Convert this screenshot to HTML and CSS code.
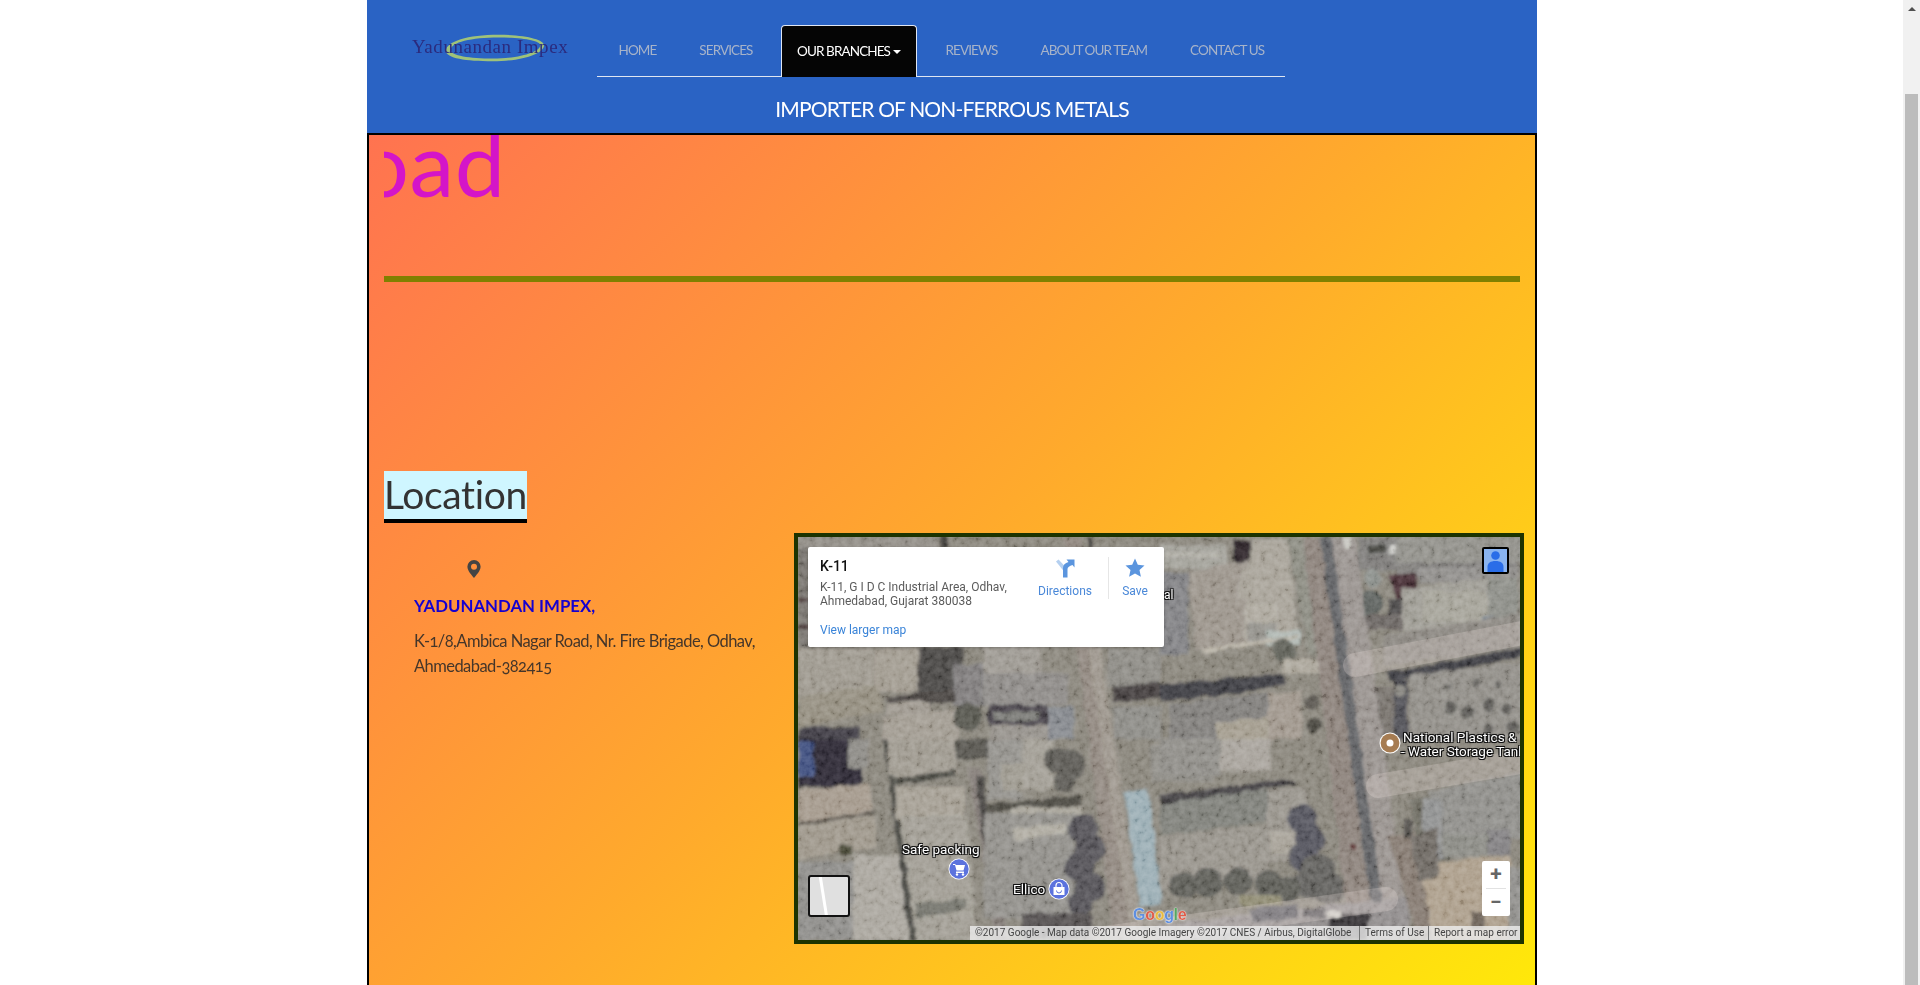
FILE: index.html
```html
<!DOCTYPE html>
<html lang="en">
<head>
<meta charset="utf-8">
<title>Yadunandan Impex - Ahmedabad</title>
<link rel="stylesheet" href="styles.css">
</head>
<body>
<div class="viewport">
  <div class="page">
    <header class="site-header">
      <div class="header-row">
        <a class="logo" href="#">
          <svg class="logo-ring" viewBox="0 0 105 30" aria-hidden="true"><path fill-rule="evenodd" d="M1 18C1 8 24 1 56 1c28 0 48 5 48 11 0 9-24 17-54 17C22 29 1 26 1 18Zm5-1c0 6 20 9 44 9 28 0 50-7 50-14 0-5-19-8-44-8C28 4 6 9 6 17Z" fill="#9fc27a"/></svg>
          <span class="logo-text">Yadunandan Impex</span>
        </a>
        <nav class="main-nav">
          <a class="nav-item" href="#">HOME</a>
          <a class="nav-item" href="#">SERVICES</a>
          <a class="nav-item nav-active" href="#">OUR BRANCHES<span class="caret"></span></a>
          <a class="nav-item" href="#">REVIEWS</a>
          <a class="nav-item" href="#">ABOUT OUR TEAM</a>
          <a class="nav-item" href="#">CONTACT US</a>
        </nav>
      </div>
      <div class="tagline">IMPORTER OF NON-FERROUS METALS</div>
    </header>
    <main class="content">
      <div class="marquee"><span class="marquee-text">oad</span></div>
      <div class="rule"></div>
      <h2 class="location-title">Location</h2>
      <div class="location-row">
        <div class="address">
          <svg class="pin" viewBox="0 0 14 18" aria-hidden="true"><path fill-rule="evenodd" d="M7 0a6.6 6.6 0 0 1 6.6 6.6C13.600 11 9 15.500 7 18 5 15.500.4 11 .4 6.600A6.600 6.600 0 0 1 7 0Zm0 3.700a3 3 0 1 0 0 6 3 3 0 0 0 0-6Z"/></svg>
          <h4 class="company">YADUNANDAN IMPEX,</h4>
          <p class="street">K-1/8,Ambica Nagar Road, Nr. Fire Brigade, Odhav, Ahmedabad-382415</p>
        </div>
        <div class="map">
          <svg class="map-image" viewBox="0 0 722 403" width="722" height="403" aria-hidden="true">
            <defs>
              <filter id="soft" x="-3%" y="-3%" width="106%" height="106%"><feTurbulence type="fractalNoise" baseFrequency="0.08" numOctaves="2" seed="7" result="n"/><feDisplacementMap in="SourceGraphic" in2="n" scale="6" xChannelSelector="R" yChannelSelector="G"/><feGaussianBlur stdDeviation="1.4"/></filter>
              <filter id="grain" x="0" y="0" width="100%" height="100%"><feTurbulence type="fractalNoise" baseFrequency="0.16" numOctaves="3" seed="4"/><feColorMatrix values="1.6 0 0 0 -.3  1.6 0 0 0 -.3  1.6 0 0 0 -.3  0 0 0 0 1"/></filter>
            </defs>
            <g filter="url(#soft)">
              <rect x="-30" y="-30" width="790" height="470" fill="#878379"/>
              <!-- top left -->
              <rect x="0" y="0" width="140" height="12" fill="#8f8b84"/>
              <rect x="143" y="0" width="7" height="12" fill="#3c3a38"/>
              <rect x="290" y="0" width="5" height="12" fill="#3c3a38"/>
              <rect x="0" y="10" width="12" height="100" fill="#77736e"/>
              <rect x="0" y="60" width="12" height="5" fill="#4b3a3a"/>
              <rect x="0" y="88" width="12" height="4" fill="#4b3a3a"/>
              <rect x="0" y="112" width="75" height="46" fill="#9c978d"/>
              <rect x="76" y="112" width="48" height="42" fill="#a09a8f"/>
              <polygon points="0,160 80,148 85,175 0,190" fill="#928c7e"/>
              <rect x="120" y="110" width="45" height="50" fill="#4a4644"/>
              <rect x="155" y="127" width="32" height="42" fill="#7d7a7a"/>
              <rect x="185" y="110" width="58" height="26" fill="#9b9790"/>
              <rect x="185" y="136" width="85" height="32" fill="#8c8986"/>
              <polygon points="88,160 155,152 158,165 92,172" fill="#4a4442"/>
              <rect x="90" y="165" width="42" height="12" fill="#9c968d"/>
              <polygon points="85,180 160,172 160,202 85,202" fill="#a09a90"/>
              <rect x="0" y="190" width="62" height="12" fill="#3f3d44"/>
              <circle cx="170" cy="180" r="14" fill="#55554d"/>
              <polygon points="190,168 250,168 250,190 190,190" fill="#46424a"/>
              <rect x="196" y="175" width="46" height="9" fill="#7a7a76"/>
              <rect x="192" y="188" width="62" height="14" fill="#94908a"/>
              <rect x="250" y="170" width="26" height="32" fill="#84878c"/>
              <rect x="310" y="112" width="53" height="38" fill="#8b8983"/>
              <polygon points="314,150 363,145 363,160 316,166" fill="#45403f"/>
              <rect x="316" y="170" width="47" height="32" fill="#8a8984"/>
              <!-- left vertical road -->
              <polygon points="265,0 283,0 340,403 316,403" fill="#8f867e"/>
              <polygon points="290,110 302,110 345,403 333,403" fill="#9b948b"/>
              <!-- top centre -->
              <rect x="362" y="8" width="66" height="24" fill="#a09f97"/>
              <rect x="362" y="16" width="60" height="4" fill="#b0aea6"/>
              <rect x="436" y="3" width="16" height="22" fill="#2d2729"/>
              <rect x="362" y="36" width="28" height="82" fill="#7f7f82"/>
              <polygon points="390,35 452,23 452,108 398,113" fill="#9a938a"/>
              <rect x="442" y="30" width="12" height="32" fill="#a5a096"/>
              <polygon points="454,3 490,3 500,97 444,103" fill="#a6a197"/>
              <rect x="448" y="66" width="30" height="20" fill="#aca79d"/>
              <rect x="450" y="86" width="28" height="20" fill="#92908a"/>
              <rect x="468" y="94" width="34" height="14" fill="#aeb6b1"/>
              <polygon points="404,112 500,98 500,101 405,116" fill="#b8b2a6"/>
              <polygon points="490,0 505,0 525,115 510,118" fill="#8a8a80"/>
              <circle cx="486" cy="113" r="12" fill="#5f6058"/>
              <rect x="485" y="122" width="42" height="14" fill="#aaa59a"/>
              <polygon points="362,147 485,137 488,148 425,158 362,165" fill="#3e3c42"/>
              <polygon points="372,167 472,155 472,202 372,202" fill="#7f7d7a"/>
              <polygon points="418,186 472,180 472,202 418,202" fill="#a29b8d"/>
              <rect x="470" y="155" width="34" height="47" fill="#9e958b"/>
              <circle cx="514" cy="166" r="7" fill="#54514c"/>
              <circle cx="516" cy="188" r="8" fill="#484641"/>
              <rect x="522" y="112" width="6" height="16" fill="#4a3230"/>
              <!-- right of road -->
              <rect x="560" y="0" width="60" height="34" fill="#7c7a78"/>
              <rect x="570" y="8" width="18" height="8" fill="#44443f"/>
              <rect x="592" y="8" width="11" height="9" fill="#d0d0cc"/>
              <rect x="598" y="0" width="127" height="26" fill="#8f8e88"/>
              <rect x="598" y="26" width="120" height="14" fill="#7e7c79"/>
              <rect x="620" y="30" width="100" height="16" fill="#8d8b88"/>
              <polygon points="590,38 618,36 620,60 600,66" fill="#4a3238"/>
              <rect x="590" y="62" width="28" height="24" fill="#4c4a4a"/>
              <circle cx="575" cy="42" r="9" fill="#8c908c"/>
              <circle cx="572" cy="66" r="12" fill="#5c615d"/>
              <rect x="565" y="78" width="44" height="14" fill="#6a6562"/>
              <polygon points="604,52 690,42 705,80 704,92 604,100" fill="#9c9a92"/>
              <rect x="625" y="55" width="70" height="30" fill="#a4a298"/>
              <rect x="690" y="40" width="30" height="50" fill="#8b8c86"/>
              <rect x="683" y="80" width="22" height="10" fill="#707e8a"/>
              <polygon points="586,98 725,76 725,110 586,128" fill="#8a8680"/>
              <polygon points="590,135 725,110 725,120 590,145" fill="#3e3d43"/>
              <polygon points="612,138 725,125 725,202 612,202" fill="#8f8c86"/>
              <rect x="596" y="143" width="14" height="59" fill="#4f4f54"/>
              <rect x="578" y="150" width="18" height="50" fill="#75706a"/>
              <circle cx="602" cy="153" r="6" fill="#85837d"/>
              <g fill="#5a5954">
                <circle cx="652" cy="170" r="6"/><circle cx="670" cy="176" r="7"/><circle cx="690" cy="168" r="6"/><circle cx="708" cy="172" r="5"/>
                <circle cx="650" cy="150" r="3"/><circle cx="678" cy="146" r="4"/><circle cx="700" cy="148" r="3"/><circle cx="715" cy="190" r="6"/><circle cx="690" cy="192" r="5"/>
              </g>
              <!-- main road -->
              <polygon points="505,0 524,0 578,403 552,403" fill="#8a8079"/>
              <polygon points="531,0 557,0 612,403 589,403" fill="#97918d"/>
              <polygon points="522,0 533,0 590,403 578,403" fill="#5f6063"/>
              <rect x="546" y="0" width="7" height="12" fill="#c8c7c1"/>
              <!-- bottom left -->
              <rect x="0" y="202" width="64" height="48" fill="#2d2c36"/>
              <rect x="0" y="205" width="16" height="34" fill="#3f4f7e"/>
              <rect x="50" y="202" width="20" height="28" fill="#8b8984"/>
              <polygon points="0,253 72,246 74,275 0,286" fill="#a2978a"/>
              <polygon points="0,288 76,276 80,310 0,322" fill="#9c9589"/>
              <polygon points="0,286 76,274 76,277 0,289" fill="#56514a"/>
              <rect x="40" y="308" width="14" height="10" fill="#4a4938"/>
              <rect x="0" y="325" width="55" height="78" fill="#8c8b88"/>
              <rect x="55" y="318" width="55" height="85" fill="#a8a49c"/>
              <polygon points="85,202 90,202 118,403 112,403" fill="#45443f"/>
              <rect x="90" y="202" width="68" height="38" fill="#9d988e"/>
              <polygon points="92,243 155,232 157,240 94,248" fill="#4a4842"/>
              <rect x="98" y="250" width="68" height="34" fill="#a39d92"/>
              <polygon points="102,280 170,278 178,403 118,403" fill="#9f9b92"/>
              <polygon points="117,366 168,362 168,372 118,382" fill="#72726a"/>
              <polygon points="170,232 182,232 210,403 198,403" fill="#847d78"/>
              <polygon points="178,240 186,240 200,380 193,380" fill="#45423f"/>
              <rect x="158" y="202" width="32" height="20" fill="#55534d"/>
              <rect x="190" y="202" width="35" height="60" fill="#918f8a"/>
              <rect x="203" y="226" width="22" height="28" fill="#9c988e"/>
              <rect x="225" y="202" width="30" height="50" fill="#a09c93"/>
              <polygon points="188,268 282,258 285,268 188,276" fill="#48463f"/>
              <rect x="212" y="270" width="72" height="22" fill="#a8a49a"/>
              <rect x="186" y="276" width="90" height="104" fill="#8f8d88"/>
              <polygon points="214,291 268,286 268,296 218,304" fill="#aeaaa0"/>
              <g fill="#5c5a54"><circle cx="258" cy="222" r="12"/><circle cx="272" cy="228" r="15"/><circle cx="266" cy="244" r="11"/></g>
              <g fill="#525156"><circle cx="285" cy="292" r="15"/><circle cx="292" cy="312" r="15"/><circle cx="282" cy="330" r="15"/><circle cx="292" cy="350" r="15"/><circle cx="282" cy="366" r="12"/></g>
              <rect x="224" y="376" width="70" height="27" fill="#52504f"/>
              <polygon points="326,255 350,251 364,366 342,370" fill="#99acb3"/>
              <rect x="353" y="208" width="60" height="36" fill="#8c8a84"/>
              <!-- bottom right -->
              <polygon points="362,262 470,252 470,285 362,298" fill="#7d7e78"/>
              <polygon points="362,300 470,288 470,342 362,350" fill="#96928a"/>
              <polygon points="362,258 492,242 498,247 362,267" fill="#424043"/>
              <rect x="362" y="202" width="60" height="36" fill="#8d8b86"/>
              <rect x="422" y="202" width="50" height="32" fill="#a6a19a"/>
              <rect x="470" y="252" width="38" height="72" fill="#96928a"/>
              <rect x="472" y="295" width="24" height="22" fill="#a5a096"/>
              <g fill="#52525c"><circle cx="505" cy="282" r="15"/><circle cx="512" cy="302" r="15"/><circle cx="506" cy="320" r="15"/></g>
              <g fill="#605f5c"><circle cx="520" cy="335" r="18"/><circle cx="530" cy="352" r="16"/><circle cx="508" cy="348" r="14"/></g>
              <g fill="#5c5c56"><circle cx="385" cy="348" r="13"/><circle cx="410" cy="346" r="15"/><circle cx="440" cy="344" r="14"/><circle cx="470" cy="348" r="14"/><circle cx="490" cy="352" r="13"/></g>
              <rect x="440" y="358" width="45" height="11" rx="5" fill="#8e8a72"/>
              <polygon points="360,388 610,360 612,403 360,403" fill="#8f8b8b"/>
              <polygon points="452,372 500,367 500,380 455,386" fill="#5f5f65"/>
              <rect x="505" y="372" width="22" height="8" fill="#555356"/>
              <rect x="530" y="376" width="40" height="27" fill="#373638"/>
              <rect x="530" y="374" width="14" height="6" fill="#cfcdc7"/>
              <circle cx="555" cy="311" r="3" fill="#5e3434"/>
              <polygon points="590,300 640,290 655,403 620,403" fill="#847970"/>
              <polygon points="612,262 640,260 652,330 622,326" fill="#6c6a60"/>
              <polygon points="630,255 725,235 725,300 640,312" fill="#8d8c88"/>
              <rect x="624" y="262" width="20" height="62" fill="#8e8f8f"/>
              <rect x="645" y="297" width="45" height="24" fill="#8a8a84"/>
              <rect x="690" y="292" width="22" height="26" fill="#807e80"/>
              <polygon points="622,328 712,318 725,403 636,403" fill="#ab9d8a"/>
              <rect x="710" y="330" width="15" height="73" fill="#8e8d8a"/>
              <rect x="673" y="374" width="14" height="18" fill="#6c6258"/>
              <polygon points="612,300 640,290 640,340 620,345" fill="#6d6862"/>
              <rect x="606" y="282" width="8" height="18" fill="#504e4a"/>
            </g>
            <rect class="map-grain" width="722" height="403" filter="url(#grain)"/>
            <g fill="none" stroke="#f3e8e0" stroke-opacity=".24" stroke-linecap="round" stroke-width="24">
              <path d="M557 128 L740 93"/>
              <path d="M580 249 L740 222"/>
              <path d="M588 362 L300 402"/>
            </g>
          </svg>

          <span class="map-label label-al">al</span>
          <span class="map-label label-safe">Safe packing</span>
          <span class="map-label label-ellico">Ellico</span>
          <span class="map-label label-nat1">National Plastics &amp;</span>
          <span class="map-label label-nat2">- Water Storage Tanks</span>

          <svg class="poi poi-cart" viewBox="0 0 22 22" aria-hidden="true"><circle cx="11" cy="11" r="10.500" fill="#fff"/><circle cx="11" cy="11" r="9.700" fill="#5b72dd"/><path d="M5 6h2l1 1h9l-1.500 5.500H8.500L7 7H5Zm3 7.500h8V15H8Z" fill="#fff"/><circle cx="9" cy="16.500" r="1.200" fill="#fff"/><circle cx="15" cy="16.500" r="1.200" fill="#fff"/></svg>
          <svg class="poi poi-bag" viewBox="0 0 22 22" aria-hidden="true"><circle cx="11" cy="11" r="10.500" fill="#fff"/><circle cx="11" cy="11" r="9.700" fill="#5b72dd"/><path d="M5.500 9h11v8h-11Z" fill="#fff"/><path d="M8 9V7.500a3 3 0 0 1 6 0V9" fill="none" stroke="#fff" stroke-width="1.200"/><path d="M8.500 12.500a2.500 2.500 0 0 0 5 0" fill="none" stroke="#5b72dd" stroke-width="1"/></svg>
          <svg class="poi poi-nat" viewBox="0 0 22 22" aria-hidden="true"><circle cx="11" cy="11" r="10.500" fill="#fff"/><circle cx="11" cy="11" r="9.400" fill="#a67c52"/><circle cx="11" cy="11" r="3.500" fill="#fff"/></svg>

          <div class="info-card">
            <div class="info-main">
              <div class="info-title">K-11</div>
              <div class="info-address">K-11, G I D C Industrial Area, Odhav,<br>Ahmedabad, Gujarat 380038</div>
              <a class="info-link" href="#">View larger map</a>
            </div>
            <div class="info-action info-directions">
              <svg class="info-icon" viewBox="0 0 20 20" aria-hidden="true"><path d="M1 3.500 3.500 1.500 11 9.500l-2 4Z" fill="#b5d0f0"/><path d="M8 19.500V10C8 7 10 5 13.500 4L11.500 1.500H19.500V9.500L17.500 7C14.500 8 12.500 9 12.500 11V19.500Z" fill="#5b95de"/></svg>
              <span>Directions</span>
            </div>
            <div class="info-action info-save">
              <svg class="info-icon" viewBox="0 0 20 20" aria-hidden="true"><path d="M10 .5l2.800 6.300 6.700.7-5 4.600 1.400 6.700L10 15.400 4.100 18.800l1.400-6.700-5-4.600 6.700-.7Z" fill="#5b95de"/></svg>
              <span>Save</span>
            </div>
          </div>

          <div class="pegman">
            <svg viewBox="0 0 23 23" aria-hidden="true"><circle cx="11.500" cy="6.500" r="4.300" fill="#2a6de8"/><path d="M3.500 23v-5c0-4 3-6 8-6s8 2 8 6v5Z" fill="#2a6de8"/></svg>
          </div>
          <div class="zoom-box">
            <span class="zoom-btn">+</span>
            <span class="zoom-line"></span>
            <span class="zoom-btn">−</span>
          </div>
          <div class="thumb"><span class="thumb-stripe"></span></div>
          <div class="google-logo"><span class="g-b">G</span><span class="g-r">o</span><span class="g-y">o</span><span class="g-b">g</span><span class="g-g">l</span><span class="g-r">e</span></div>
          <div class="attribution">
            <span class="attr-data">©2017 Google - Map data ©2017 Google Imagery ©2017 CNES / Airbus, DigitalGlobe</span>
            <span class="attr-terms">Terms of Use</span>
            <span class="attr-report">Report a map error</span>
          </div>
        </div>
      </div>
    </main>
  </div>
  <aside class="scrollbar" aria-hidden="true">
    <span class="scroll-arrow"></span>
    <span class="scroll-thumb"></span>
  </aside>
</div>
</body>
</html>
```
FILE: styles.css
```css
* { box-sizing: border-box; }
html, body { margin: 0; height: 100%; background: #fff; overflow: hidden; }
body { font-family: "Lato", "Liberation Sans", sans-serif; color: #333; }
a { text-decoration: none; color: inherit; }

.viewport { display: flex; height: 985px; }
.page { flex: none; width: 1903px; padding: 0 366px 0 367px; display: flex; flex-direction: column; }
.scrollbar { flex: none; width: 17px; background: #f1f1f1; display: flex; flex-direction: column; align-items: center; }
.scroll-arrow { margin-top: 7px; width: 0; height: 0; border-left: 4px solid transparent; border-right: 4px solid transparent; border-bottom: 4px solid #505050; }
.scroll-thumb { margin-top: 83px; width: 13px; flex: 1; background: #bcbcbc; }

.site-header { flex: none; height: 133px; background: #2a63c4; }
.header-row { display: flex; height: 77px; }
.logo { flex: none; width: 230px; position: relative; padding: 37px 0 0 45px; display: block; }
.logo-text { position: relative; display: block; font-family: "Liberation Serif", serif; font-size: 19px; line-height: 20px; color: #2b2b7e; white-space: nowrap; letter-spacing: .55px; }
.logo-ring { position: absolute; left: 78px; top: 33px; width: 100px; height: 30px; }
.main-nav { flex: none; width: 688px; display: flex; align-items: flex-end; height: 77px; border-bottom: 1px solid #dfe6f2; }
.nav-item { height: 52px; padding: 0 21.500px; font-size: 13.500px; line-height: 52px; letter-spacing: -.9px; color: #a7b3c9; white-space: nowrap; }
.nav-active { margin: 0 7px -1px; height: 52px; padding: 0 15px; line-height: 50px; background: #050505; color: #fff; border: 1px solid #dfe6f2; border-bottom: 0; border-radius: 4px 4px 0 0; }
.caret { display: inline-block; margin-left: 3px; vertical-align: 2px; width: 0; height: 0; border-left: 4px solid transparent; border-right: 4px solid transparent; border-top: 4px solid #fff; }
.tagline { margin-top: 18px; text-align: center; font-size: 21px; line-height: 27px; letter-spacing: -.85px; color: #fff; }

.content { flex: 1; min-height: 0; overflow: hidden; padding: 0 15px; border: 2px solid #000; border-width: 2px 2px 0; background: linear-gradient(135deg, #ff7350, #ffaa2c 50%, #ffe80a); }
.marquee { height: 141px; overflow: hidden; }
.marquee-text { display: block; margin: -23px 0 0 -26px; font-size: 90px; line-height: 100px; letter-spacing: .5px; color: #d415c8; }
.rule { height: 6px; background: #808000; }
.location-title { display: inline-block; height: 52px; margin: 189px 0 0; border-bottom: 4px solid #000; background: #cff6ff; font-weight: 400; font-size: 39px; line-height: 46px; letter-spacing: -.35px; color: #333; }
.location-row { display: flex; margin: 10px -4px 0 0; }
.address { flex: none; width: 410px; padding: 27px 30px 0; }
.pin { display: block; width: 14px; height: 18px; margin-left: 53px; fill: #444; }
.company { margin: 16px 0 0; font-size: 16.800px; line-height: 24px; font-weight: 700; color: #1500d0; white-space: nowrap; }
.street { margin: 11px 0 0; font-size: 16.500px; line-height: 25px; letter-spacing: -.55px; color: #45362a; font-variant-numeric: oldstyle-nums; }

.map { position: relative; flex: none; width: 730px; height: 411px; border: 4px solid #1c3300; overflow: hidden; background: #8d8983; font-family: "Roboto", "Liberation Sans", sans-serif; }
.map-image { display: block; }
.map-grain { mix-blend-mode: soft-light; opacity: .4; }
.map-label { position: absolute; color: #fff; white-space: nowrap; font-size: 13.500px; line-height: 15px; text-shadow: -1px -1px 0 #111, 1px -1px 0 #111, -1px 1px 0 #111, 1px 1px 0 #111, 0 0 2px #000; }
.label-al { left: 366px; top: 51px; font-size: 12px; }
.label-safe { left: 104px; top: 305px; }
.label-ellico { left: 215px; top: 345px; }
.label-nat1 { left: 605px; top: 193px; }
.label-nat2 { left: 603px; top: 207px; }
.poi { position: absolute; width: 22px; height: 22px; }
.poi-cart { left: 150px; top: 321px; }
.poi-bag { left: 250px; top: 341px; }
.poi-nat { left: 581px; top: 195px; }

.info-card { position: absolute; left: 10px; top: 10px; width: 356px; height: 100px; background: #fff; border-radius: 2px; display: flex; box-shadow: 0 1px 3px rgba(0,0,0,.2); }
.info-main { flex: none; width: 214px; padding: 10px 0 0 12px; }
.info-title { font-size: 14px; line-height: 18px; font-weight: 500; color: #111; }
.info-address { margin-top: 5px; font-size: 12px; line-height: 14px; color: #5b5b5b; white-space: nowrap; }
.info-link { display: block; margin-top: 15px; font-size: 12px; line-height: 14px; color: #3a84d8; white-space: nowrap; }
.info-action { flex: none; display: flex; flex-direction: column; align-items: center; font-size: 12px; line-height: 14px; color: #4a88d8; padding-top: 11px; }
.info-icon { display: block; width: 20px; height: 20px; margin-bottom: 6px; }
.info-directions { width: 86px; }
.info-save { width: 54px; position: relative; }
.info-save::before { content: ""; position: absolute; left: 0; top: 10px; height: 42px; width: 1px; background: #e6e6e6; }

.pegman { position: absolute; left: 684px; top: 10px; width: 27px; height: 27px; border: 2px solid #000; border-radius: 2px; background: #8ab4f0; }
.pegman svg { display: block; width: 23px; height: 23px; }
.zoom-box { position: absolute; left: 684px; top: 324px; width: 28px; height: 55px; background: #fff; border-radius: 2px; display: flex; flex-direction: column; align-items: center; }
.zoom-btn { flex: 1; font-size: 21px; line-height: 26px; font-weight: 700; color: #666; }
.zoom-line { width: 20px; height: 1px; background: #e2e2e2; }
.thumb { position: absolute; left: 10px; top: 338px; width: 42px; height: 42px; background: #e0e0e0; border: 2px solid #111; border-radius: 3px; overflow: hidden; }
.thumb-stripe { display: block; width: 3px; height: 44px; margin: -2px 0 0 12px; background: #fff; transform: rotate(-9deg); }
.google-logo { position: absolute; left: 335px; top: 368px; font-family: "Liberation Sans", sans-serif; font-size: 16px; line-height: 20px; font-weight: 700; letter-spacing: -.3px; text-shadow: 0 0 1px #fff, 0 0 2px #fff; }
.g-b { color: #5f8fe0; }
.g-r { color: #df5d4a; }
.g-y { color: #e9bb3f; }
.g-g { color: #56a760; }
.attribution { position: absolute; left: 172px; right: 0; bottom: 0; height: 14px; display: flex; font-size: 10px; line-height: 14px; color: #444; white-space: nowrap; }
.attribution span { background: rgba(240,240,240,.78); padding: 0 5px; }
.attr-data { width: 389px; }
.attr-terms { width: 69px; border-left: 1px solid #777; }
.attr-report { width: 92px; border-left: 1px solid #777; }
```
